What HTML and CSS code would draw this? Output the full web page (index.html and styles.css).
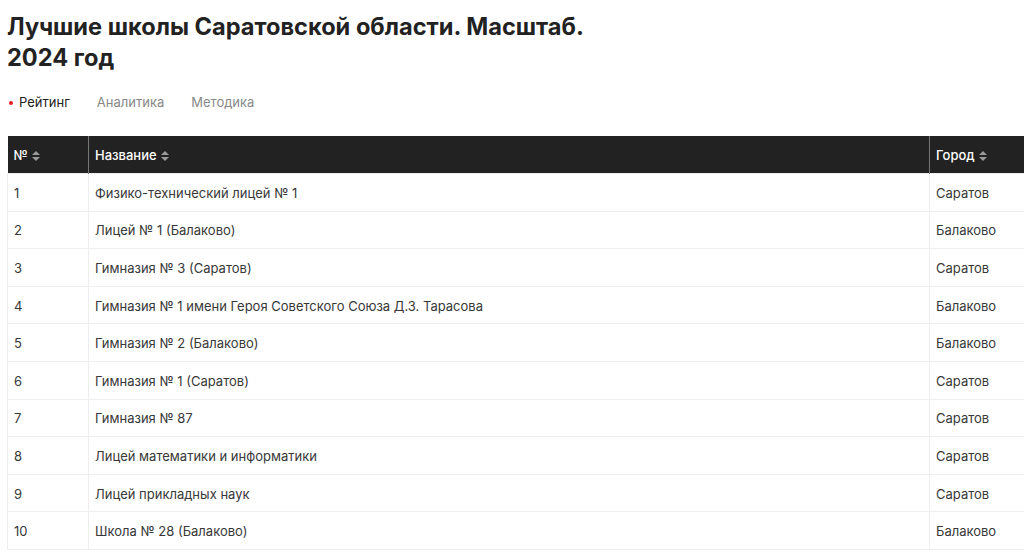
FILE: index.html
```html
<!DOCTYPE html>
<html lang="ru">
<head>
<meta charset="utf-8">
<link rel="stylesheet" href="styles.css">
</head>
<body>
<div class="page">
  <h1 class="title">Лучшие школы Саратовской области. Масштаб.<br>2024 год</h1>
  <nav class="tabs">
    <span class="tab active">Рейтинг</span>
    <span class="tab">Аналитика</span>
    <span class="tab">Методика</span>
  </nav>
  <div class="table-wrap">
    <table class="rating">
      <colgroup><col class="c-num"><col class="c-name"><col class="c-city"></colgroup>
      <thead>
        <tr>
          <th>№ <span class="sort"></span></th>
          <th>Название <span class="sort"></span></th>
          <th>Город <span class="sort"></span></th>
        </tr>
      </thead>
      <tbody>
        <tr><td>1</td><td>Физико-технический лицей № 1</td><td>Саратов</td></tr>
        <tr><td>2</td><td>Лицей № 1 (Балаково)</td><td>Балаково</td></tr>
        <tr><td>3</td><td>Гимназия № 3 (Саратов)</td><td>Саратов</td></tr>
        <tr><td>4</td><td>Гимназия № 1 имени Героя Советского Союза Д.З. Тарасова</td><td>Балаково</td></tr>
        <tr><td>5</td><td>Гимназия № 2 (Балаково)</td><td>Балаково</td></tr>
        <tr><td>6</td><td>Гимназия № 1 (Саратов)</td><td>Саратов</td></tr>
        <tr><td>7</td><td>Гимназия № 87</td><td>Саратов</td></tr>
        <tr><td>8</td><td>Лицей математики и информатики</td><td>Саратов</td></tr>
        <tr><td>9</td><td>Лицей прикладных наук</td><td>Саратов</td></tr>
        <tr><td>10</td><td>Школа № 28 (Балаково)</td><td>Балаково</td></tr>
      </tbody>
    </table>
  </div>
</div>
</body>
</html>
```

FILE: styles.css
```css
html, body {
  margin: 0;
  padding: 0;
  background: #fff;
  overflow: hidden;
}
body {
  font-family: "Inter", "Noto Sans", sans-serif;
  color: #222;
}
.page {
  padding: 11px 0 0 7px;
}
.title {
  margin: 0;
  font-size: 23.6px;
  line-height: 31px;
  font-weight: 700;
  color: #222;
}
.tabs {
  display: flex;
  gap: 27px;
  margin-top: 19px;
  font-size: 13px;
  line-height: 20px;
  padding-left: 12px;
}
.tab {
  color: #888;
  position: relative;
}
.tab.active {
  color: #222;
}
.tab.active::before {
  content: "";
  position: absolute;
  left: -10px;
  top: 9px;
  width: 4px;
  height: 4px;
  border-radius: 50%;
  background: #e02020;
}
.table-wrap {
  margin-top: 24px;
  width: 1017px;
  overflow: hidden;
}
.rating {
  border-collapse: collapse;
  width: 1100px;
  table-layout: fixed;
  font-size: 13px;
}
.c-num { width: 81px; }
.c-name { width: 841px; }
.rating th {
  background: #222;
  color: #fff;
  font-weight: 500;
  text-align: left;
  height: 37px;
  padding: 0 6px;
  border-left: 1px solid #777;
}
.rating th:first-child { border-left: none; }
.rating td {
  height: 37.6px;
  padding: 1px 6px 0;
  border: 1px solid #eee;
  color: #383838;
  box-sizing: border-box;
}
.sort {
  display: inline-block;
  width: 8px;
  height: 10px;
  vertical-align: -1px;
  position: relative;
  margin-left: 1px;
}
.sort::before, .sort::after {
  content: "";
  position: absolute;
  left: 0;
  border-left: 4px solid transparent;
  border-right: 4px solid transparent;
}
.sort::before { top: 0; border-bottom: 4px solid #999; }
.sort::after { bottom: 0; border-top: 4px solid #999; }
```
